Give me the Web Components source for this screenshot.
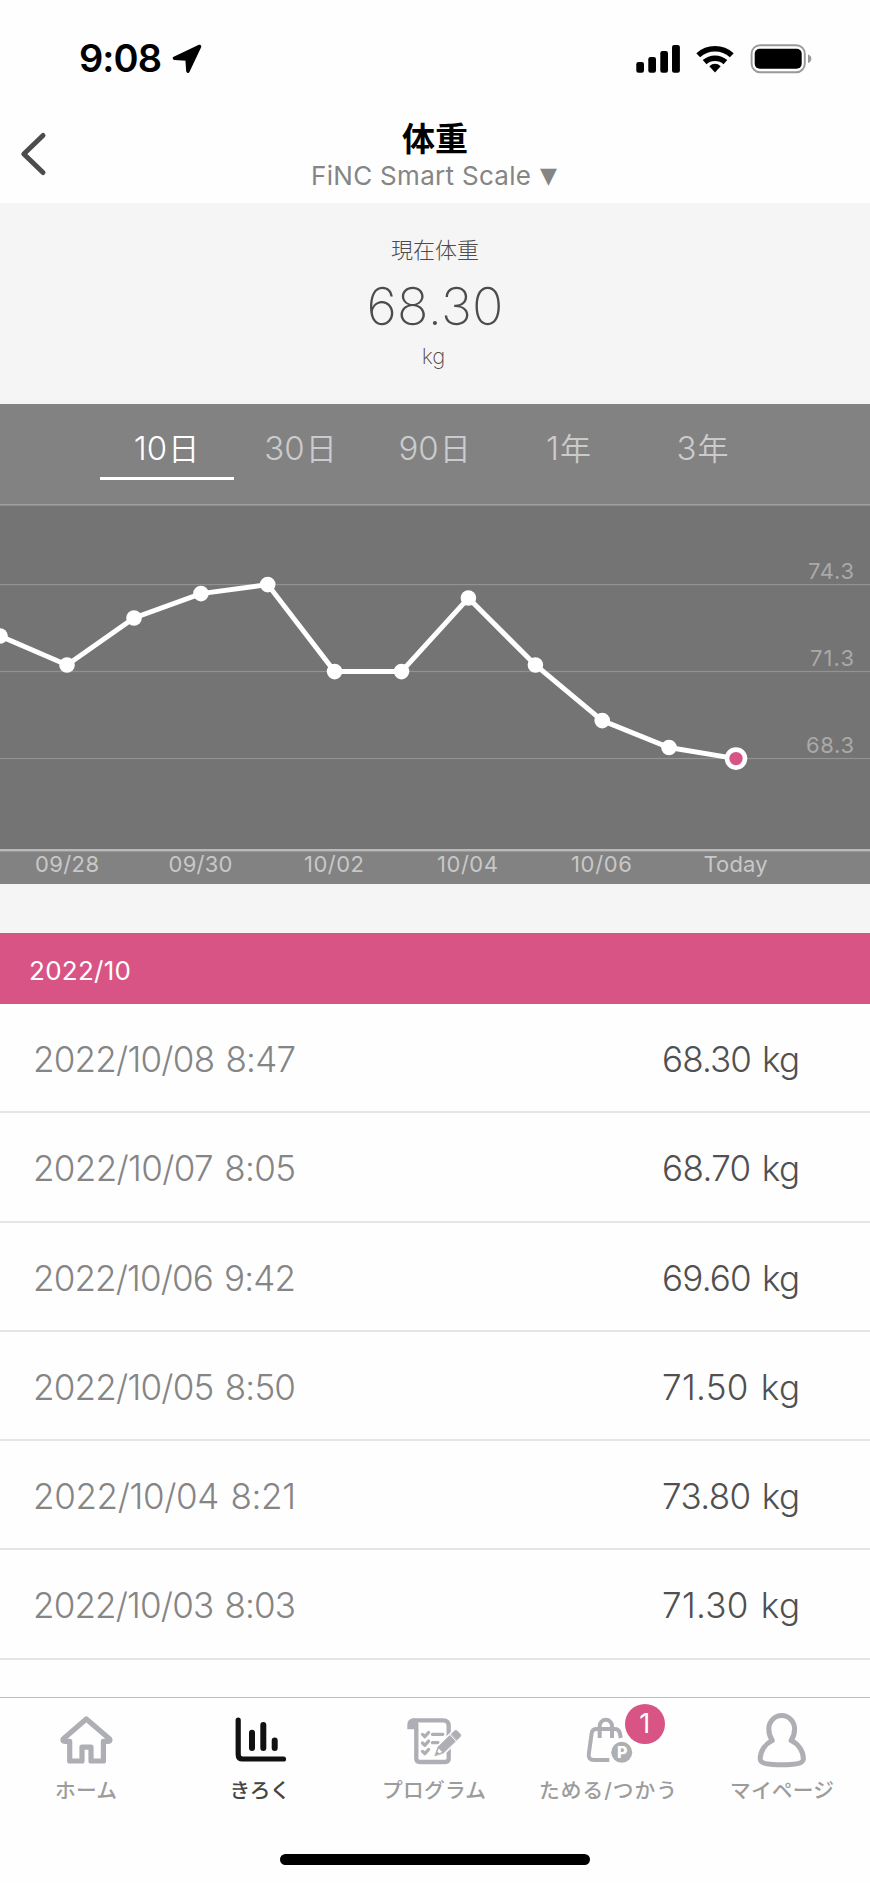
<!DOCTYPE html>
<html lang="ja">
<head>
<meta charset="utf-8">
<title>体重</title>
<style>
    body {
        margin: 0;
        background: #fefefe;
        font-family: Inter, "Noto Sans CJK JP", sans-serif;
    }
</style>
</head>
<body>
<weight-app></weight-app>

<script>
// text that spreads its letters over a fixed width
class FitText extends HTMLElement {
    constructor() {
        super();
        this.attachShadow({ mode: 'open' });
        this.shadowRoot.innerHTML = `
        <style>
            :host { display: inline-block; white-space: nowrap; }
            span { display: inline-block; }
        </style>
        <span><slot></slot></span>`;
    }

    connectedCallback() {
        const width = Number(this.getAttribute('width'));
        const span = this.shadowRoot.querySelector('span');
        // the text may come through the slot of an outer element
        const nodes = this.shadowRoot.querySelector('slot').assignedNodes({ flatten: true });
        const count = nodes.map(node => node.textContent).join('').trim().length;
        const spacing = (width - span.getBoundingClientRect().width) / (count - 1);
        span.style.letterSpacing = `${spacing}px`;
        span.style.marginRight = `${-spacing}px`;
    }
}
window.customElements.define('fit-text', FitText);

class StatusBar extends HTMLElement {
    constructor() {
        super();
        this.attachShadow({ mode: 'open' });
        this.shadowRoot.innerHTML = `
        <style>
            :host {
                display: flex;
                align-items: center;
                justify-content: space-between;
                height: 117px;
                padding: 0 58px 0 79px;
                color: #000;
            }
            .left { display: flex; align-items: center; gap: 10px; }
            .time { padding-bottom: 1px; font-size: 38px; font-weight: 600; line-height: 1; }
            svg { display: block; }
        </style>
        <div class="left">
            <fit-text class="time" width="83"><slot></slot></fit-text>
            <svg width="30" height="30" viewBox="0 0 30 30">
                <path d="M27.6 2.4 L15.9 27.2 L15 15 L2.4 14.2 Z" stroke="#000" stroke-width="3.4" stroke-linejoin="round"/>
            </svg>
        </div>
        <svg width="176" height="30" viewBox="636 43 176 30">
            <rect x="636.3" y="61" width="7.7" height="10.7" rx="2.2"/>
            <rect x="648.3" y="56" width="7.7" height="15.7" rx="2.2"/>
            <rect x="660.3" y="50" width="7.7" height="21.7" rx="2.2"/>
            <rect x="672" y="44" width="7.9" height="27.7" rx="2.2"/>
            <path d="M698.2 54.2 A25 25 0 0 1 731.8 54.2 M704.6 61.2 A15.6 15.6 0 0 1 725.4 61.2" fill="none" stroke="#000" stroke-width="5.6"/>
            <path d="M709.3 65.2 Q715 60.4 720.7 65.2 L715 71.4 Z"/>
            <rect x="751.6" y="44.2" width="53.2" height="27" rx="8.5" fill="none" stroke="#999" stroke-width="1.9"/>
            <rect x="754.7" y="47.7" width="47" height="20" rx="5"/>
            <path d="M808 53.5 Q811.4 55 811.4 57.8 T808 62.2 Z" fill="#999"/>
        </svg>`;
    }
}
window.customElements.define('status-bar', StatusBar);

class PageHeader extends HTMLElement {
    constructor() {
        super();
        this.attachShadow({ mode: 'open' });
        this.shadowRoot.innerHTML = `
        <style>
            :host {
                display: grid;
                grid-template-columns: 60px 1fr 60px;
                height: 86px;
            }
            svg { display: block; margin: 13px 0 0 16px; }
            .titles {
                display: flex;
                flex-direction: column;
                align-items: center;
            }
            .title {
                font-size: 33px;
                font-weight: 700;
                line-height: 44px;
                color: #000;
            }
            .device {
                display: flex;
                gap: 9px;
                padding-right: 2px;
                font-size: 26px;
                line-height: 29px;
                color: #858585;
            }
            .arrow { font-family: "DejaVu Sans", sans-serif; font-size: 22px; }
        </style>
        <svg width="34" height="48" viewBox="16 130 34 48">
            <path d="M43 135.5 L23.8 154 L43 172.5" fill="none" stroke="#4c4c4c" stroke-width="5" stroke-linecap="round" stroke-linejoin="round"/>
        </svg>
        <div class="titles">
            <div class="title"><slot></slot></div>
            <div class="device">
                <fit-text width="220"><slot name="device"></slot></fit-text>
                <span class="arrow">▼</span>
            </div>
        </div>`;
    }
}
window.customElements.define('page-header', PageHeader);

class CurrentWeight extends HTMLElement {
    constructor() {
        super();
        this.attachShadow({ mode: 'open' });
        this.shadowRoot.innerHTML = `
        <style>
            :host {
                display: flex;
                flex-direction: column;
                align-items: center;
                height: 171px;
                padding-top: 30px;
                background: #f5f5f5;
                color: #4c4c4c;
            }
            .label { font-size: 22px; font-weight: 300; line-height: 35px; }
            .value { font-size: 52px; font-weight: 200; line-height: 78px; }
            .unit { font-size: 22px; font-weight: 200; line-height: 20px; padding-right: 3px; }
        </style>
        <div class="label"><slot name="label"></slot></div>
        <fit-text class="value" width="137"><slot></slot></fit-text>
        <div class="unit"><slot name="unit"></slot></div>`;
    }
}
window.customElements.define('current-weight', CurrentWeight);

class RangeTabs extends HTMLElement {
    constructor() {
        super();
        this.attachShadow({ mode: 'open' });
        this.shadowRoot.innerHTML = `
        <style>
            :host {
                display: grid;
                grid-template-columns: repeat(5, 134px);
                justify-content: center;
                height: 100px;
                background: #828282;
            }
            ::slotted(*) {
                height: 56px;
                padding-top: 17px;
                border-bottom: 3px solid transparent;
                font-size: 33px;
                font-weight: 350;
                line-height: 55px;
                text-align: center;
                color: #cbcbcb;
            }
            ::slotted(.active) { color: #fff; border-color: #fff; }
        </style>
        <slot></slot>`;
    }
}
window.customElements.define('range-tabs', RangeTabs);

class WeightChart extends HTMLElement {
    constructor() {
        super();
        this.attachShadow({ mode: 'open' });
        this.points = [
            [0, 132], [67, 161], [134, 114], [201, 89.6], [267.7, 80.6], [334.6, 167.6],
            [401.5, 167.6], [468.4, 94], [535.4, 161], [602.2, 216.6], [669, 243.5], [736, 254.6]
        ];
        this.levels = [['74.3', 80.6, 46], ['71.3', 167.5, 44], ['68.3', 254.5, 48]];
        this.days = [
            ['09/28', 36, 62], ['09/30', 169.5, 62], ['10/02', 305, 58],
            ['10/04', 438, 59], ['10/06', 572, 59], ['Today', 704.5, 62]
        ];
    }

    connectedCallback() {
        const lines = this.levels.map(([, y]) => `<rect y="${y - 0.6}" width="870" height="1.2" fill="#929292"/>`).join('');
        const levels = this.levels.map(([text, y, width]) =>
            `<text x="${854 - width}" y="${y - 5.3}" textLength="${width}" fill="#a9a9a9">${text}</text>`).join('');
        const days = this.days.map(([text, x, width]) =>
            `<text x="${x - 1}" y="367.5" textLength="${width + 2}" fill="#c8c8c8">${text}</text>`).join('');
        const dots = this.points.slice(0, -1).map(([x, y]) => `<circle cx="${x}" cy="${y}" r="7.8"/>`).join('');
        const [lastX, lastY] = this.points[this.points.length - 1];

        this.shadowRoot.innerHTML = `
        <style>
            :host { display: block; background: #747474; }
            svg { display: block; }
            text { font-size: 22px; }
        </style>
        <svg width="870" height="380" viewBox="0 0 870 380">
            <rect width="870" height="1.6" fill="#a0a0a0"/>
            <rect y="346" width="870" height="34" fill="#828282"/>
            <rect y="345" width="870" height="2.4" fill="#b9b9b9"/>
            ${lines}${levels}${days}
            <polyline points="${this.points.join(' ')}" fill="none" stroke="#fff" stroke-width="5"/>
            <g fill="#fff">${dots}</g>
            <circle cx="${lastX}" cy="${lastY}" r="9" fill="#d75484" stroke="#fff" stroke-width="4.6"/>
        </svg>`;
    }
}
window.customElements.define('weight-chart', WeightChart);

class MonthHeading extends HTMLElement {
    constructor() {
        super();
        this.attachShadow({ mode: 'open' });
        this.shadowRoot.innerHTML = `
        <style>
            :host {
                display: block;
                height: 71px;
                margin-top: 49px;
                padding-left: 29px;
                background: #d75484;
                color: #fff;
                font-size: 26px;
                line-height: 76px;
            }
        </style>
        <fit-text width="102"><slot></slot></fit-text>`;
    }
}
window.customElements.define('month-heading', MonthHeading);

class WeightRow extends HTMLElement {
    constructor() {
        super();
        this.attachShadow({ mode: 'open' });
        this.shadowRoot.innerHTML = `
        <style>
            :host {
                display: flex;
                justify-content: space-between;
                box-sizing: border-box;
                height: 109.3px;
                padding: 0 70px 0 33px;
                border-bottom: 2px solid #e5e5e5;
                font-size: 35px;
                font-weight: 300;
                line-height: 110px;
                word-spacing: 2px;
                color: #505050;
            }
            .date { color: #858585; }
        </style>
        <fit-text class="date" width="263"><slot name="date"></slot></fit-text>
        <fit-text width="138"><slot></slot></fit-text>`;
    }
}
window.customElements.define('weight-row', WeightRow);

const tabIcons = {
    home: `
        <path d="M86.3 21 L63.2 41 Q62 43.4 65 43.4 H69.7 V63 H82 V49.2 H91 V63 H103.4 V43.4 H108 Q111 43.4 109.6 41 Z"/>`,
    record: `
        <path d="M64.2 22.2 V56.5 Q64.2 61 68.7 61 H109.5" stroke-width="5.2"/>
        <path d="M78 34.8 V50 M89.3 27 V50 M100.7 42.4 V50" stroke-width="6"/>`,
    program: `
        <path d="M66 22.4 H95 Q100.7 22.4 100.7 28 V60.5 Q100.7 64 97 64 H72 Q68.3 64 68.3 60.5 V26" stroke-width="4.3"/>
        <path d="M59.3 31.3 V27 Q59.3 20.3 66 20.3 Q70 21.5 70 27 V31.3 Z" fill="currentColor" stroke="none"/>
        <path d="M74.5 36.4 L76.8 38.7 L80.6 34.5 M74.5 45 L76.8 47.3 L80.6 43.1 M74.5 53.4 L76.8 55.7 L80.6 51.5 M84.5 36.3 H94.8 M84.5 44.7 H90" stroke-width="3.3"/>
        <g transform="translate(87 57.5) rotate(-44)">
            <path d="M-1 0 L8 -4 H31 Q33 -4 33 -2 V2 Q33 4 31 4 H8 Z" fill="#fefefe" stroke="#fefefe" stroke-width="4"/>
            <path d="M0 0 L8 -4 H24.5 V4 H8 Z M26.3 -4 H31 Q33 -4 33 -2 V2 Q33 4 31 4 H26.3 Z" fill="currentColor" stroke="currentColor" stroke-width="0.8"/>
            <path d="M4.6 -1.2 L7.5 -2.4 V2.4 L4.6 1.2 Z" fill="#fefefe" stroke="none"/>
        </g>`,
    shop: `
        <path d="M77.7 40 V28 A6.15 6.15 0 0 1 90 28 V40 M98.8 40 L97.8 35 Q97 31 92.5 31 H74.5 Q70.3 31 69.7 35 L66.8 56 Q66 62 72 62 H87.3" stroke-width="4" stroke-linecap="butt"/>
        <circle cx="99.7" cy="54.3" r="10.5" fill="currentColor" stroke="none"/>
        <text x="100.2" y="60" text-anchor="middle" fill="#fefefe" stroke="none">P</text>`,
    user: `
        <path d="M76.3 42.5 C73.5 38.5 72.8 35.5 72.8 31 A12.9 13.5 0 0 1 98.6 31 C98.6 35.5 97.9 38.5 95.1 42.5 C103 46 107.4 54 107.4 61 C107.4 65.5 99 66.8 85.8 66.8 S64.2 65.5 64.2 61 C64.2 54 68.5 46 76.3 42.5 Z" stroke-width="5"/>`
};

class TabItem extends HTMLElement {
    constructor() {
        super();
        this.attachShadow({ mode: 'open' });
    }

    connectedCallback() {
        const badge = this.getAttribute('badge');
        this.shadowRoot.innerHTML = `
        <style>
            :host {
                display: flex;
                flex-direction: column;
                align-items: center;
                position: relative;
                color: #aeaeb5;
            }
            :host([active]) { color: #111; }
            svg { display: block; }
            svg text { font: 800 16px Inter, sans-serif; }
            .label {
                padding-right: 2px;
                font-size: 20.7px;
                font-weight: 500;
                line-height: 32px;
                color: #9c9c9c;
            }
            :host([active]) .label { color: #444; }
            .badge {
                position: absolute;
                left: 102.7px;
                top: 6px;
                width: 40px;
                height: 40px;
                border-radius: 50%;
                background: #d75484;
                color: #fff;
                font-size: 27px;
                line-height: 40px;
                text-align: center;
            }
        </style>
        <svg width="174" height="77" viewBox="0 0 174 77" fill="none" stroke="currentColor" stroke-width="5.2" stroke-linecap="round" stroke-linejoin="round">
            ${tabIcons[this.getAttribute('icon')]}
        </svg>
        <fit-text class="label" width="${this.getAttribute('width')}"><slot></slot></fit-text>
        ${badge ? `<div class="badge">${badge}</div>` : ''}`;
    }
}
window.customElements.define('tab-item', TabItem);

class TabBar extends HTMLElement {
    constructor() {
        super();
        this.attachShadow({ mode: 'open' });
        this.shadowRoot.innerHTML = `
        <style>
            :host {
                display: block;
                height: 186px;
                margin-top: 37px;
                border-top: 1px solid #bcbcbe;
            }
            nav { display: grid; grid-template-columns: repeat(5, 174px); }
            .indicator {
                width: 310px;
                height: 11px;
                margin: 47px auto 0;
                border-radius: 6px;
                background: #000;
            }
        </style>
        <nav><slot></slot></nav>
        <div class="indicator"></div>`;
    }
}
window.customElements.define('tab-bar', TabBar);

const appTemplate = document.createElement('template');
appTemplate.innerHTML = `
<style>
    :host { display: block; width: 870px; height: 1883px; overflow: hidden; }
    .records { background: #f5f5f5; height: 775.8px; }
    .month { display: flow-root; }
    .rows { background: #fefefe; }
    range-tabs span { margin: 0 1px; font-size: 31px; }
</style>
<status-bar>9:08</status-bar>
<page-header>体重<span slot="device">FiNC Smart Scale</span></page-header>
<current-weight><span slot="label">現在体重</span>68.30<span slot="unit">kg</span></current-weight>
<range-tabs>
    <div class="active">10<span>日</span></div>
    <div>30<span>日</span></div>
    <div>90<span>日</span></div>
    <div>1<span>年</span></div>
    <div>3<span>年</span></div>
</range-tabs>
<weight-chart></weight-chart>
<div class="records">
    <div class="month">
        <month-heading>2022/10</month-heading>
    </div>
    <div class="rows"></div>
</div>
<tab-bar>
    <tab-item icon="home" width="62">ホーム</tab-item>
    <tab-item icon="record" width="61" active>きろく</tab-item>
    <tab-item icon="program" width="104">プログラム</tab-item>
    <tab-item icon="shop" width="138" badge="1">ためる/つかう</tab-item>
    <tab-item icon="user" width="104">マイページ</tab-item>
</tab-bar>
`;

class WeightApp extends HTMLElement {
    constructor() {
        super();
        this.attachShadow({ mode: 'open' });
        this.shadowRoot.appendChild(appTemplate.content.cloneNode(true));
        this.records = [
            ['2022/10/08 8:47', '68.30 kg'],
            ['2022/10/07 8:05', '68.70 kg'],
            ['2022/10/06 9:42', '69.60 kg'],
            ['2022/10/05 8:50', '71.50 kg'],
            ['2022/10/04 8:21', '73.80 kg'],
            ['2022/10/03 8:03', '71.30 kg']
        ];
    }

    connectedCallback() {
        const rows = this.shadowRoot.querySelector('.rows');
        this.records.forEach(([date, weight]) => {
            const row = document.createElement('weight-row');
            row.innerHTML = `<span slot="date">${date}</span>${weight}`;
            rows.appendChild(row);
        });
    }
}
window.customElements.define('weight-app', WeightApp);
</script>
</body>
</html>
